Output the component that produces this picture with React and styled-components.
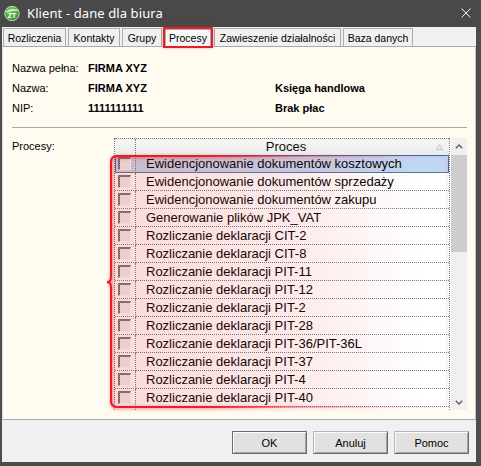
import React from "react";
import styled, { createGlobalStyle } from "styled-components";

const GlobalStyle = createGlobalStyle`
  html, body { margin: 0; padding: 0; background: #4d4d4d; }
  * { box-sizing: border-box; }
`;

const UI_FONT = `"Liberation Sans", Arial, sans-serif`;

const Window = styled.div`
  width: 481px;
  height: 466px;
  background: #4d4d4d;
  display: flex;
  flex-direction: column;
  font-family: ${UI_FONT};
  overflow: hidden;
`;

const TitleBar = styled.div`
  height: 27px;
  flex-shrink: 0;
  display: flex;
  align-items: center;
  padding: 0 10px 1px 4px;
  background: #494949;
`;

const Title = styled.div`
  margin-left: 7px;
  color: #ffffff;
  font-family: "Noto Sans", "Open Sans", sans-serif;
  font-size: 13px;
  letter-spacing: 0.1px;
`;

const CloseBox = styled.div`
  margin-left: auto;
  width: 10px;
  height: 10px;
  display: flex;
`;

const Body = styled.div`
  flex: 1;
  display: flex;
  flex-direction: column;
  margin: 0 5px 4px 2px;
  background: #f0f0f0;
`;

const TabStrip = styled.div`
  height: 19px;
  flex-shrink: 0;
  display: flex;
  align-items: flex-end;
  padding-left: 1px;
  gap: 2px;
`;

const Tab = styled.div`
  width: ${(p) => p.$w}px;
  height: ${(p) => (p.$active ? 17 : 18)}px;
  margin: ${(p) => (p.$active ? "0 1px 0 1px" : "0")};
  border: 1px solid #adadad;
  border-bottom: none;
  background: ${(p) => (p.$active ? "#f7f7f7" : "#f0f0f0")};
  font-size: 10.5px;
  color: #000;
  display: flex;
  align-items: center;
  justify-content: center;
  outline: ${(p) => (p.$active ? "2px solid #e3202a" : "none")};
  box-shadow: ${(p) => (p.$active ? "0 0 3px 2px rgba(227,32,42,0.35)" : "none")};
  position: relative;
  z-index: ${(p) => (p.$active ? 2 : 0)};
`;

const TabPanel = styled.div`
  flex: 1;
  background: #fffbf1;
  border-top: 1px solid #a9a9a9;
  border-bottom: 1px solid #a9a9a9;
  border-left: 1px solid #dcdcdc;
  border-right: 1px solid #c4c4c4;
  padding: 11px 8px 0 9px;
  display: flex;
  flex-direction: column;
`;

const InfoGrid = styled.div`
  display: grid;
  grid-template-columns: 76px 187px 1fr;
  grid-auto-rows: 20px;
  align-items: center;
  font-size: 11px;
  color: #000;
`;

const Label = styled.div`
  font-weight: normal;
  line-height: ${(p) => p.$lh || 20}px;
`;

const Value = styled.div`
  font-weight: bold;
  line-height: 20px;
`;

const Separator = styled.div`
  height: 1px;
  margin-top: 9px;
  background: #a6a6a6;
`;

const ProcessSection = styled.div`
  margin-top: 10px;
  display: flex;
  font-size: 11px;
`;

const SectionLabel = styled.div`
  width: 102px;
  line-height: 17px;
  color: #000;
`;

const GridWrap = styled.div`
  position: relative;
  display: flex;
  height: 272px;
`;

const Table = styled.div`
  width: 336px;
  background: #ffffff;
  border-left: 1px dotted #7a7a7a;
  border-right: 1px dotted #7a7a7a;
  display: flex;
  flex-direction: column;
  overflow: hidden;
  font-size: 13px;
  color: #000;
`;

const HeaderRow = styled.div`
  height: 17px;
  flex-shrink: 0;
  display: grid;
  grid-template-columns: 21px 1fr;
  background: linear-gradient(#f6f6f6, #ebebeb);
  border-top: 1px dotted #7a7a7a;
`;

const HeaderCheckCell = styled.div`
  border-right: 1px dotted #7a7a7a;
`;

const HeaderTitleCell = styled.div`
  display: flex;
  align-items: center;
  padding-right: 6px;
`;

const HeaderText = styled.div`
  flex: 1;
  text-align: center;
  line-height: 16px;
  color: #111;
`;

const Row = styled.div`
  height: 18px;
  flex-shrink: 0;
  display: grid;
  grid-template-columns: 21px 1fr;
  background: ${(p) => (p.$selected ? "linear-gradient(90deg, #c6d8ef, #c0d7f2)" : "#ffffff")};
  box-shadow: ${(p) => (p.$selected ? "inset 0 0 0 1px #3a6fb5" : "none")};
`;

const FillerRow = styled.div`
  flex: 1;
  display: grid;
  grid-template-columns: 21px 1fr;
`;

const CheckCell = styled.div`
  border-right: 1px dotted #7a7a7a;
  border-bottom: ${(p) => (p.$last ? "none" : "1px dotted #7a7a7a")};
  display: flex;
  align-items: center;
  padding-left: 3px;
`;

const TextCell = styled.div`
  border-bottom: ${(p) => (p.$last ? "none" : "1px dotted #7a7a7a")};
  padding-left: 10px;
  line-height: 17px;
  white-space: nowrap;
`;

const CheckBox = styled.div`
  width: 13px;
  height: 13px;
  background: #efefef;
  border-top: 2px solid #787878;
  border-left: 2px solid #787878;
  border-right: 1px solid #fbfbfb;
  border-bottom: 1px solid #fbfbfb;
`;

const ScrollBar = styled.div`
  width: 16px;
  margin-left: 1px;
  background: #f0f0f0;
  display: flex;
  flex-direction: column;
`;

const ArrowButton = styled.div`
  height: ${(p) => p.$h}px;
  flex-shrink: 0;
  display: flex;
  align-items: center;
  justify-content: center;
`;

const Thumb = styled.div`
  height: 97px;
  flex-shrink: 0;
  background: #cdcdcd;
`;

const Track = styled.div`
  flex: 1;
`;

const Highlight = styled.svg`
  position: absolute;
  left: -14px;
  top: 12px;
  width: 360px;
  height: 265px;
  pointer-events: none;
  overflow: visible;
`;

const ButtonBar = styled.div`
  height: 42px;
  flex-shrink: 0;
  display: flex;
  justify-content: flex-end;
  align-items: flex-start;
  gap: 6px;
  padding: 11px 7px 0 0;
`;

const Button = styled.div`
  width: 75px;
  height: 23px;
  display: flex;
  align-items: center;
  justify-content: center;
  font-size: 11px;
  color: #000;
  background: #e1e1e1;
  border: 1px solid;
  border-color: ${(p) => (p.$default ? "#6e6e6e" : "#b4b4b4 #6a6a6a #6a6a6a #b4b4b4")};
  box-shadow: inset 1px 1px 0 #fcfcfc, inset -1px -1px 0 #a3a3a3;
`;

const tabs = [
  { label: "Rozliczenia", w: 63 },
  { label: "Kontakty", w: 52 },
  { label: "Grupy", w: 40 },
  { label: "Procesy", w: 46, active: true },
  { label: "Zawieszenie działalności", w: 127 },
  { label: "Baza danych", w: 70 },
];

const processes = [
  "Ewidencjonowanie dokumentów kosztowych",
  "Ewidencjonowanie dokumentów sprzedaży",
  "Ewidencjonowanie dokumentów zakupu",
  "Generowanie plików JPK_VAT",
  "Rozliczanie deklaracji CIT-2",
  "Rozliczanie deklaracji CIT-8",
  "Rozliczanie deklaracji PIT-11",
  "Rozliczanie deklaracji PIT-12",
  "Rozliczanie deklaracji PIT-2",
  "Rozliczanie deklaracji PIT-28",
  "Rozliczanie deklaracji PIT-36/PIT-36L",
  "Rozliczanie deklaracji PIT-37",
  "Rozliczanie deklaracji PIT-4",
  "Rozliczanie deklaracji PIT-40",
];

const AppIcon = () => (
  <svg width="16" height="16" viewBox="0 0 16 16">
    <defs>
      <radialGradient id="ic" cx="0.4" cy="0.3" r="0.8">
        <stop offset="0" stopColor="#7ccf5a" />
        <stop offset="1" stopColor="#2c8a2a" />
      </radialGradient>
    </defs>
    <circle cx="8" cy="8.5" r="7.2" fill="url(#ic)" stroke="#e8f4e0" strokeWidth="0.8" />
    <path d="M2.5 7 Q8 3.5 13.5 5.5" stroke="#ffffff" strokeWidth="1.2" fill="none" />
    <text x="8" y="13" textAnchor="middle" fontSize="7" fontWeight="bold" fill="#ffffff" fontFamily="Liberation Sans, sans-serif">ZT</text>
  </svg>
);

const CloseIcon = () => (
  <svg width="10" height="10" viewBox="0 0 10 10">
    <path d="M0.5 0.5 L9.5 9.5 M9.5 0.5 L0.5 9.5" stroke="#f2f2f2" strokeWidth="1" />
  </svg>
);

const Chevron = ({ up }) => (
  <svg width="8" height="5" viewBox="0 0 8 5">
    <polyline
      points={up ? "0.8,4.2 4,1 7.2,4.2" : "0.8,0.8 4,4 7.2,0.8"}
      fill="none"
      stroke="#606060"
      strokeWidth="1.4"
    />
  </svg>
);

const SortGlyph = () => (
  <svg width="7" height="6" viewBox="0 0 7 6">
    <polygon points="3.5,0.5 6.5,5.5 0.5,5.5" fill="none" stroke="#c4c4c4" strokeWidth="1" />
  </svg>
);

const OVERLAY_PATH =
  "M17 6 H341 Q347 6 347 12 V251 Q347 257 341 257 H17 Q11 257 11 251 V137 Q11 132 7 132 Q11 132 11 127 V12 Q11 6 17 6 Z";

const HighlightOverlay = () => (
  <Highlight viewBox="0 0 360 265">
    <defs>
      <linearGradient id="hlFill" gradientUnits="userSpaceOnUse" x1="11" y1="0" x2="347" y2="0">
        <stop offset="0" stopColor="#dc2828" stopOpacity="0.17" />
        <stop offset="0.53" stopColor="#dc2828" stopOpacity="0.1" />
        <stop offset="0.74" stopColor="#dc2828" stopOpacity="0.05" />
        <stop offset="0.92" stopColor="#dc2828" stopOpacity="0" />
      </linearGradient>
      <linearGradient id="hlStroke" gradientUnits="userSpaceOnUse" x1="7" y1="0" x2="347" y2="0">
        <stop offset="0" stopColor="#ea1c24" stopOpacity="1" />
        <stop offset="0.3" stopColor="#ea1c24" stopOpacity="0.95" />
        <stop offset="0.55" stopColor="#ea1c24" stopOpacity="0.35" />
        <stop offset="0.85" stopColor="#ea1c24" stopOpacity="0.08" />
        <stop offset="1" stopColor="#ea1c24" stopOpacity="0.05" />
      </linearGradient>
      <filter id="hlBlur" x="-10%" y="-10%" width="120%" height="120%">
        <feGaussianBlur stdDeviation="1.6" />
      </filter>
    </defs>
    <path d={OVERLAY_PATH} fill="url(#hlFill)" />
    <path d={OVERLAY_PATH} fill="none" stroke="url(#hlStroke)" strokeWidth="3" opacity="0.45" filter="url(#hlBlur)" transform="translate(0.5 1)" />
    <path d={OVERLAY_PATH} fill="none" stroke="url(#hlStroke)" strokeWidth="2" />
  </Highlight>
);

export default function App() {
  return (
    <>
      <GlobalStyle />
      <Window>
        <TitleBar>
          <AppIcon />
          <Title>Klient - dane dla biura</Title>
          <CloseBox>
            <CloseIcon />
          </CloseBox>
        </TitleBar>
        <Body>
          <TabStrip>
            {tabs.map((t) => (
              <Tab key={t.label} $w={t.w} $active={t.active}>
                {t.label}
              </Tab>
            ))}
          </TabStrip>
          <TabPanel>
            <InfoGrid>
              <Label>Nazwa pełna:</Label>
              <Value>FIRMA XYZ</Value>
              <div />
              <Label>Nazwa:</Label>
              <Value>FIRMA XYZ</Value>
              <Value>Księga handlowa</Value>
              <Label>NIP:</Label>
              <Value>1111111111</Value>
              <Value>Brak płac</Value>
            </InfoGrid>
            <Separator />
            <ProcessSection>
              <SectionLabel>Procesy:</SectionLabel>
              <GridWrap>
                <Table>
                  <HeaderRow>
                    <HeaderCheckCell />
                    <HeaderTitleCell>
                      <HeaderText>Proces</HeaderText>
                      <SortGlyph />
                    </HeaderTitleCell>
                  </HeaderRow>
                  {processes.map((p, i) => (
                    <Row key={p} $selected={i === 0}>
                      <CheckCell>
                        <CheckBox />
                      </CheckCell>
                      <TextCell>{p}</TextCell>
                    </Row>
                  ))}
                  <FillerRow>
                    <CheckCell $last />
                    <TextCell $last />
                  </FillerRow>
                </Table>
                <ScrollBar>
                  <ArrowButton $h={17}>
                    <Chevron up />
                  </ArrowButton>
                  <Thumb />
                  <Track />
                  <ArrowButton $h={16}>
                    <Chevron />
                  </ArrowButton>
                </ScrollBar>
                <HighlightOverlay />
              </GridWrap>
            </ProcessSection>
          </TabPanel>
          <ButtonBar>
            <Button $default>OK</Button>
            <Button>Anuluj</Button>
            <Button>Pomoc</Button>
          </ButtonBar>
        </Body>
      </Window>
    </>
  );
}
